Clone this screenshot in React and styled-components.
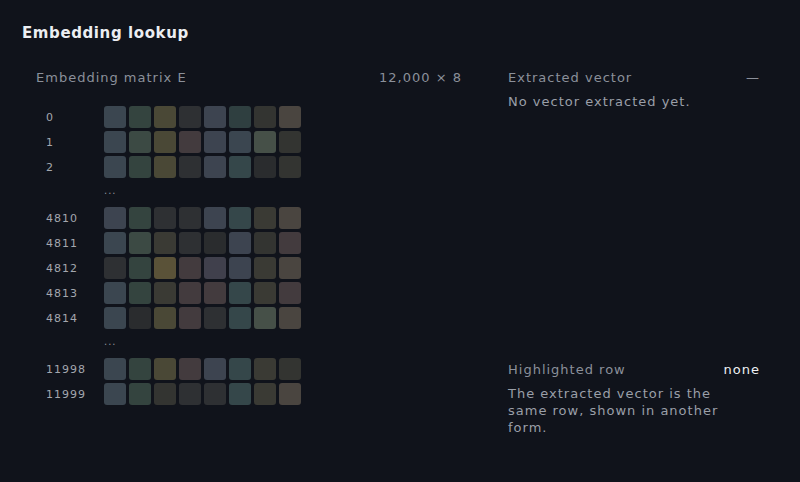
import styled, { createGlobalStyle } from "styled-components";

const Global = createGlobalStyle`
  html, body { margin: 0; background: #0f1219; }
  body { font-family: "DejaVu Sans", "Noto Sans", sans-serif; }
`;

const P = {
  a: "#3b4650", b: "#34443f", c: "#4a4836", d: "#2e3033", e: "#3d4450",
  f: "#2f3f40", g: "#333431", h: "#4a4540", i: "#433b3e", j: "#3c4a44",
  k: "#465048", l: "#2a2c2e", m: "#40404c", n: "#35474a", o: "#5a5238",
  p: "#3a3a34",
};

const rows = [
  { label: "0", cells: "abcdefgh" },
  { label: "1", cells: "ajcieakg" },
  { label: "2", cells: "abcdenlg" },
  { gap: true },
  { label: "4810", cells: "ebddenph" },
  { label: "4811", cells: "ajpdlegi" },
  { label: "4812", cells: "dboimeph" },
  { label: "4813", cells: "abpiinpi" },
  { label: "4814", cells: "alcidnkh" },
  { gap: true },
  { label: "11998", cells: "abcienpg" },
  { label: "11999", cells: "abgddnph" },
];

export default function App() {
  return (
    <>
      <Global />
      <Card>
        <Title>Embedding lookup</Title>
        <Columns>
          <Left>
            <Head>
              <Label>Embedding matrix E</Label>
              <Label>12,000 × 8</Label>
            </Head>
            <Matrix>
              {rows.map((r, i) =>
                r.gap ? (
                  <Dots key={i}>...</Dots>
                ) : (
                  <Row key={i}>
                    <RowLabel>{r.label}</RowLabel>
                    <Cells>
                      {r.cells.split("").map((c, j) => (
                        <Cell key={j} $c={P[c]} />
                      ))}
                    </Cells>
                  </Row>
                )
              )}
            </Matrix>
          </Left>
          <Right>
            <div>
              <Head>
                <Label>Extracted vector</Label>
                <Label>—</Label>
              </Head>
              <Text>No vector extracted yet.</Text>
            </div>
            <div>
              <Head>
                <Label>Highlighted row</Label>
                <Value>none</Value>
              </Head>
              <Text>The extracted vector is the same row, shown in another form.</Text>
            </div>
          </Right>
        </Columns>
      </Card>
    </>
  );
}

const Card = styled.div`
  width: 800px;
  height: 482px;
  box-sizing: border-box;
  padding: 24px 22px 0 22px;
  background: #10131b;
  letter-spacing: 1px;
`;

const Title = styled.h1`
  margin: 0;
  font-size: 15px;
  font-weight: 700;
  color: #eceef2;
  letter-spacing: 0.6px;
`;

const Columns = styled.div`
  display: flex;
  gap: 46px;
  padding: 28px 18px 0 14px;
`;

const Left = styled.div`
  width: 426px;
`;

const Right = styled.div`
  flex: 1;
  display: flex;
  flex-direction: column;
  justify-content: space-between;
  height: 366px;
`;

const Head = styled.div`
  display: flex;
  justify-content: space-between;
  align-items: baseline;
`;

const Label = styled.span`
  font-size: 13px;
  color: #8b909a;
`;

const Value = styled.span`
  font-size: 13px;
  color: #eef0f3;
`;

const Text = styled.p`
  margin: 8px 0 0;
  max-width: 228px;
  font-size: 13px;
  line-height: 17px;
  color: #9a9fa8;
`;

const Matrix = styled.div`
  margin-top: 21px;
  display: flex;
  flex-direction: column;
  gap: 3px;
`;

const Row = styled.div`
  display: flex;
  align-items: center;
`;

const RowLabel = styled.span`
  width: 68px;
  padding-left: 10px;
  box-sizing: border-box;
  font-size: 11px;
  color: #a3a7ae;
`;

const Cells = styled.div`
  display: flex;
  gap: 3px;
`;

const Cell = styled.div`
  width: 22px;
  height: 22px;
  border-radius: 3px;
  background: ${(p) => p.$c};
`;

const Dots = styled.div`
  padding-left: 68px;
  height: 23px;
  line-height: 20px;
  font-size: 10px;
  color: #8b909a;
`;
